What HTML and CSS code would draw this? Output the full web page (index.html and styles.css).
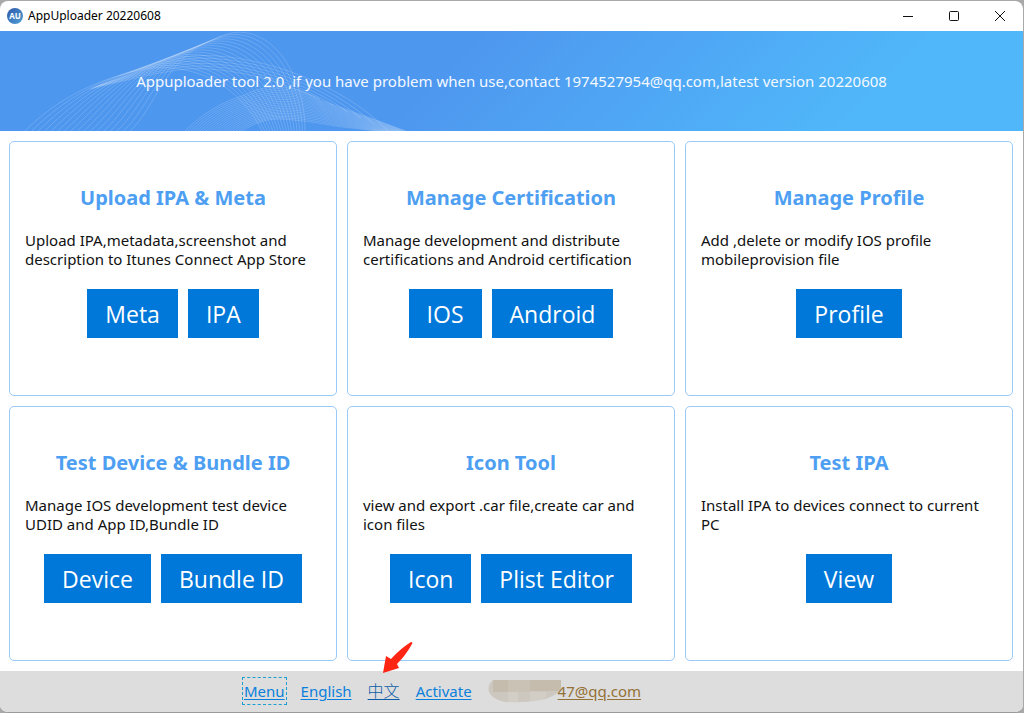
FILE: index.html
```html
<!DOCTYPE html>
<html lang="en">
<head>
<meta charset="utf-8">
<title>AppUploader 20220608</title>
<link rel="stylesheet" href="styles.css">
</head>
<body>
<div class="window">
  <header class="titlebar">
    <svg class="logo" viewBox="0 0 16 16" aria-hidden="true">
      <defs><linearGradient id="logoFill" x1="0" y1="0" x2="1" y2="1"><stop offset="0" stop-color="#2f55a8"/><stop offset="1" stop-color="#4fa3d6"/></linearGradient></defs>
      <circle cx="8" cy="8" r="8" fill="url(#logoFill)"/>
      <text class="logo-text" x="8" y="11" text-anchor="middle">AU</text>
    </svg>
    <span class="app-name">AppUploader 20220608</span>
    <div class="controls">
      <button class="control" aria-label="Minimize"><svg viewBox="0 0 10 10"><path d="M0 5.5H10"/></svg></button>
      <button class="control" aria-label="Maximize"><svg viewBox="0 0 10 10"><rect x=".5" y=".5" width="9" height="9" rx="1"/></svg></button>
      <button class="control" aria-label="Close"><svg viewBox="0 0 10 10"><path d="M0 0L10 10M10 0L0 10"/></svg></button>
    </div>
  </header>
  <section class="banner">
    <svg class="waves" viewBox="0 0 420 100" aria-hidden="true"></svg>
    <p class="banner-text">Appuploader tool 2.0 ,if you have problem when use,contact 1974527954@qq.com,latest version 20220608</p>
  </section>
  <main class="cards">
    <article class="card">
      <h2 class="card-title">Upload IPA &amp; Meta</h2>
      <p class="card-text">Upload IPA,metadata,screenshot and description to Itunes Connect App Store</p>
      <div class="actions"><button class="action">Meta</button><button class="action">IPA</button></div>
    </article>
    <article class="card">
      <h2 class="card-title">Manage Certification</h2>
      <p class="card-text">Manage development and distribute certifications and Android certification</p>
      <div class="actions"><button class="action">IOS</button><button class="action">Android</button></div>
    </article>
    <article class="card">
      <h2 class="card-title">Manage Profile</h2>
      <p class="card-text">Add ,delete or modify IOS profile mobileprovision file</p>
      <div class="actions"><button class="action">Profile</button></div>
    </article>
    <article class="card">
      <h2 class="card-title">Test Device &amp; Bundle ID</h2>
      <p class="card-text">Manage IOS development test device UDID and App ID,Bundle ID</p>
      <div class="actions"><button class="action">Device</button><button class="action">Bundle ID</button></div>
    </article>
    <article class="card">
      <h2 class="card-title">Icon Tool</h2>
      <p class="card-text">view and export .car file,create car and icon files</p>
      <div class="actions"><button class="action">Icon</button><button class="action">Plist Editor</button></div>
    </article>
    <article class="card">
      <h2 class="card-title">Test IPA</h2>
      <p class="card-text">Install IPA to devices connect to current PC</p>
      <div class="actions"><button class="action">View</button></div>
    </article>
  </main>
  <footer class="footer">
    <a class="link focused" href="#menu">Menu</a>
    <a class="link" href="#english">English</a>
    <a class="link chinese" href="#chinese" lang="zh">中文<svg class="pointer" viewBox="0 0 30 32" aria-hidden="true"><path d="M28 0Q30 0 29 2Q23 13 14 22L16 26L0 31L3 14L8 17Q18 6 28 0Z"/></svg></a>
    <a class="link" href="#activate">Activate</a>
    <span class="account">
      <svg class="smudge" viewBox="0 0 74 24" aria-hidden="true">
        <path fill="#cdc8bf" d="M5 1H73V10Q66 19 52 21Q36 24 18 23Q5 21 1 13Q-1 6 5 1Z"/>
        <path fill="#c5bcae" d="M5 1H20V13H5ZM42 1H73V12H42Z"/>
        <path fill="#cac2b5" d="M20 1H42V13H20Z"/>
        <path fill="#d2cec5" d="M20 13H30V23H20ZM42 13H58V19Q50 22 42 22Z"/>
      </svg>
      <a class="link mail" href="#account">47@qq.com</a>
    </span>
  </footer>
</div>
<script src="waves.js"></script>
</body>
</html>
```
FILE: styles.css
```css
* { box-sizing: border-box; }
body {
  margin: 0;
  min-height: 100vh;
  padding: 1px 1px 0 0;
  display: flex;
  background: #a9a9a9;
  font-family: "Noto Sans", "Open Sans", "Noto Sans CJK SC", sans-serif;
}
.window {
  flex: 1;
  min-width: 0;
  display: flex;
  flex-direction: column;
  background: #fff;
  border-bottom: 1px solid #999;
  border-radius: 8px;
  overflow: hidden;
}
.titlebar {
  display: flex;
  align-items: center;
  height: 30px;
  padding-left: 7px;
  gap: 5px;
}
.logo { width: 16px; height: 16px; }
.logo-text { font: bold 8px "Open Sans", sans-serif; fill: #fff; }
.app-name { font-size: 12px; line-height: 16px; color: #000; }
.controls { margin-left: auto; display: flex; align-self: stretch; }
.control {
  width: 46px;
  padding: 0;
  border: 0;
  background: none;
  display: flex;
  align-items: center;
  justify-content: center;
}
.control svg { width: 10px; height: 10px; fill: none; stroke: #111; overflow: visible; }
.banner {
  position: relative;
  height: 100px;
  flex: none;
  display: flex;
  align-items: center;
  justify-content: center;
  background: linear-gradient(135deg, #4e97ef 0%, #4e97ef 43%, #50b8fa 85%, #50b8fa 100%);
}
.waves {
  position: absolute;
  left: 0;
  top: 0;
  width: 420px;
  height: 100px;
  fill: none;
  stroke: #fff;
  stroke-opacity: .17;
}
.banner-text {
  position: relative;
  margin: 0;
  font-size: 15px;
  line-height: 20px;
  color: #f4f9ff;
}
.cards {
  flex: 1;
  display: grid;
  grid-template-columns: repeat(3, minmax(0, 1fr));
  grid-auto-rows: 1fr;
  gap: 10px;
  padding: 10px 10px 10px 9px;
}
.card {
  border: 1px solid #99c9f7;
  border-radius: 5px;
  padding: 41px 15px 15px;
}
.card-title {
  margin: 0;
  text-align: center;
  font-size: 20px;
  line-height: 30px;
  color: #4e9ff2;
}
.card-text {
  margin: 18px 0 20px;
  font-size: 15px;
  line-height: 19px;
  color: #111;
}
.actions { display: flex; justify-content: center; gap: 10px; }
.action {
  height: 49px;
  padding: 0 18px;
  border: 0;
  background: #0078d9;
  color: #fff;
  font: 23px/30px "Open Sans", "Noto Sans", sans-serif;
}
.footer {
  display: flex;
  align-items: center;
  justify-content: center;
  gap: 16px;
  height: 41px;
  padding: 0 138px 2px 0;
  background: #ddd;
}
.link {
  color: #0a80dc;
  font-size: 15px;
  line-height: 24px;
  text-decoration: underline;
  text-underline-offset: 2px;
}
.focused { outline: 1px dashed #1a9fd0; outline-offset: 1px; }
.chinese { position: relative; color: #0a5ca8; font-size: 16px; font-weight: 300; }
.pointer {
  position: absolute;
  left: 15px;
  bottom: 29px;
  width: 30px;
  height: 32px;
  fill: #ff2513;
}
.account { display: flex; align-items: center; }
.smudge { width: 74px; height: 24px; margin-right: -4px; }
.mail { color: #947137; }
```
FILE: waves.js
```js
// Each family blends from one cubic chain to another, drawing the lines in between.
const families = [
  {
    count: 17,
    from: [25, 100, 60, 65, 100, 48, 140, 39, 180, 30, 235, 45, 262, 100],
    to: [130, 100, 155, 78, 165, 25, 215, 8, 262, -18, 305, 35, 305, 100]
  },
  {
    count: 6,
    from: [100, 54, 140, 40, 165, 30, 190, 25, 250, 20, 340, 50, 388, 100],
    to: [90, 58, 130, 48, 155, 42, 185, 38, 240, 35, 290, 55, 320, 68]
  },
  {
    count: 20,
    from: [185, 100, 205, 80, 225, 70, 245, 64, 270, 50, 300, 56, 320, 69, 345, 78, 380, 90, 408, 101],
    to: [242, 100, 255, 92, 265, 88, 280, 88, 300, 89, 320, 92, 335, 95, 350, 97, 370, 99, 390, 102]
  }
];
const waves = document.querySelector(".waves");
for (const { count, from, to } of families) {
  for (let i = 0; i < count; i++) {
    const t = i / (count - 1);
    const p = from.map((v, k) => v + (to[k] - v) * t);
    const path = document.createElementNS("http://www.w3.org/2000/svg", "path");
    path.setAttribute("d", `M${p[0]} ${p[1]}C${p.slice(2).join(" ")}`);
    waves.append(path);
  }
}
```
